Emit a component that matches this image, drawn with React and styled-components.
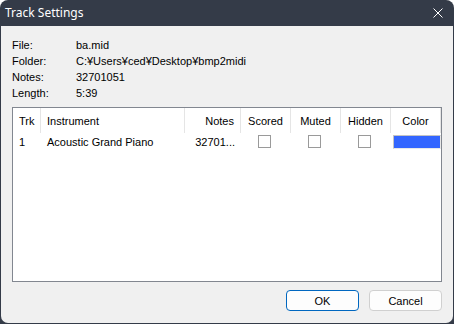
import React from 'react';
import styled, { createGlobalStyle } from 'styled-components';

const GlobalStyle = createGlobalStyle`
  html, body {
    margin: 0;
    padding: 0;
    background: #ffffff;
  }
  * {
    box-sizing: border-box;
  }
`;

const StyledWindow = styled.div`
  width: 454px;
  height: 324px;
  display: flex;
  flex-direction: column;
  background: #343b48;
  border-radius: 8px 8px 0 0;
  padding: 0 1px 1px;
  overflow: hidden;
`;

const StyledTitleBar = styled.div`
  height: 26px;
  flex: none;
  display: flex;
  align-items: center;
  justify-content: space-between;
  padding: 0 10px 1px 4px;
  color: #ffffff;
  font-family: 'Noto Sans', 'Open Sans', sans-serif;
  font-size: 12px;
`;

const StyledCloseButton = styled.svg`
  width: 10px;
  height: 10px;
  margin-top: 1px;
`;

const StyledBody = styled.div`
  flex: 1;
  display: flex;
  flex-direction: column;
  background: #f0f0f0;
  border-radius: 0 0 7px 7px;
  padding: 11px;
  font-family: 'Liberation Sans', Arial, sans-serif;
  font-size: 11px;
  color: #000000;
`;

const StyledInfo = styled.div`
  display: grid;
  grid-template-columns: 64px auto;
  line-height: 16px;
`;

const StyledList = styled.div`
  margin-top: 6px;
  height: 175px;
  flex: none;
  background: #ffffff;
  border: 1px solid #828790;
`;

const StyledRow = styled.div`
  display: grid;
  grid-template-columns: 28px 144px 56px 50px 50px 50px 50px;
  height: ${({ header }) => (header ? '25px' : '18px')};
  align-items: center;
`;

const StyledCell = styled.div`
  height: 100%;
  display: flex;
  align-items: center;
  justify-content: ${({ align }) =>
    align === 'right' ? 'flex-end' : align === 'center' ? 'center' : 'flex-start'};
  padding: 0 6px;
  white-space: nowrap;
  overflow: hidden;
  border-right: ${({ header }) => (header ? '1px solid #e5e5e5' : 'none')};
`;

const StyledCheckbox = styled.span`
  flex: none;
  width: 13px;
  height: 13px;
  margin-left: -3px;
  margin-top: -1px;
  background: #ffffff;
  border: 1px solid #9a9a9a;
`;

const StyledSwatch = styled.span`
  flex: none;
  width: 48px;
  height: 14px;
  margin: -1px -5px 0 -4px;
  background: #3366ff;
  border: 1px solid #c4c4c4;
  border-right-color: #e8e8e8;
  border-bottom-color: #e8e8e8;
`;

const StyledFooter = styled.div`
  margin-top: 8px;
  display: flex;
  justify-content: flex-end;
  gap: 10px;
`;

const StyledButton = styled.button`
  width: 73px;
  height: 21px;
  padding: 0;
  background: #fdfdfd;
  border: 1px solid ${({ primary }) => (primary ? '#0067c0' : '#d0d0d0')};
  border-radius: 4px;
  font-family: 'Liberation Sans', Arial, sans-serif;
  font-size: 11px;
  color: #000000;
`;

const columns = [
  { name: 'Trk', align: 'left' },
  { name: 'Instrument', align: 'left' },
  { name: 'Notes', align: 'right' },
  { name: 'Scored', align: 'center' },
  { name: 'Muted', align: 'center' },
  { name: 'Hidden', align: 'center' },
  { name: 'Color', align: 'center' },
];

const info = [
  ['File:', 'ba.mid'],
  ['Folder:', 'C:¥Users¥ced¥Desktop¥bmp2midi'],
  ['Notes:', '32701051'],
  ['Length:', '5:39'],
];

const App = () => (
  <>
    <GlobalStyle />
    <StyledWindow>
      <StyledTitleBar>
        <span>Track Settings</span>
        <StyledCloseButton viewBox="0 0 10 10">
          <path d="M0.5 0.5 L9.5 9.5 M9.5 0.5 L0.5 9.5" stroke="#ffffff" strokeWidth="1" fill="none" />
        </StyledCloseButton>
      </StyledTitleBar>
      <StyledBody>
        <StyledInfo>
          {info.map(([label, value]) => (
            <React.Fragment key={label}>
              <span>{label}</span>
              <span>{value}</span>
            </React.Fragment>
          ))}
        </StyledInfo>
        <StyledList>
          <StyledRow header>
            {columns.map((col) => (
              <StyledCell header key={col.name} align={col.align}>
                {col.name}
              </StyledCell>
            ))}
          </StyledRow>
          <StyledRow>
            <StyledCell>1</StyledCell>
            <StyledCell>Acoustic Grand Piano</StyledCell>
            <StyledCell align="right">32701...</StyledCell>
            <StyledCell align="center">
              <StyledCheckbox />
            </StyledCell>
            <StyledCell align="center">
              <StyledCheckbox />
            </StyledCell>
            <StyledCell align="center">
              <StyledCheckbox />
            </StyledCell>
            <StyledCell align="center">
              <StyledSwatch />
            </StyledCell>
          </StyledRow>
        </StyledList>
        <StyledFooter>
          <StyledButton primary>OK</StyledButton>
          <StyledButton>Cancel</StyledButton>
        </StyledFooter>
      </StyledBody>
    </StyledWindow>
  </>
);

export default App;
